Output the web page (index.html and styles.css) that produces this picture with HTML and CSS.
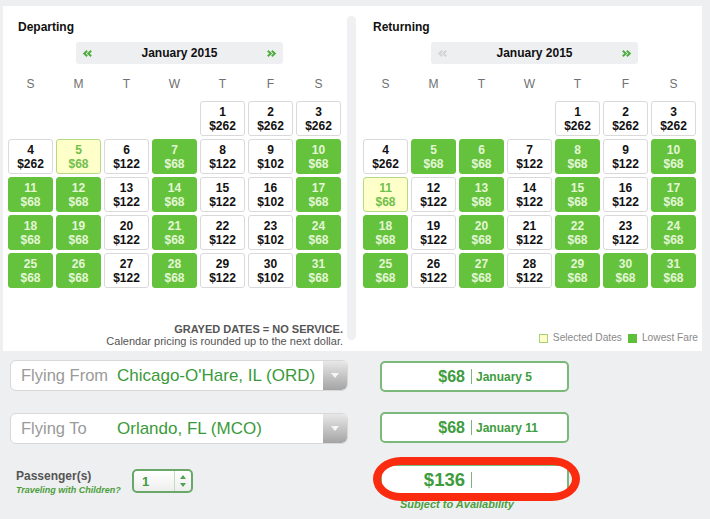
FILE: index.html
```html
<!DOCTYPE html>
<html>
<head>
<meta charset="utf-8">
<link rel="stylesheet" href="styles.css">
</head>
<body>
<div class="top">
  <section class="cal cal-depart">
    <h2 class="cal-title">Departing</h2>
    <div class="nav">
      <svg class="chev" width="9" height="7" viewBox="0 0 9 7"><path d="M4.2 0.8 L1.3 3.5 L4.2 6.2 M8.2 0.8 L5.3 3.5 L8.2 6.2" fill="none" stroke="#4fae3f" stroke-width="2"/></svg>
      <span class="month">January 2015</span>
      <svg class="chev" width="9" height="7" viewBox="0 0 9 7"><path d="M0.8 0.8 L3.7 3.5 L0.8 6.2 M4.8 0.8 L7.7 3.5 L4.8 6.2" fill="none" stroke="#4fae3f" stroke-width="2"/></svg>
    </div>
    <div class="dow"><span>S</span><span>M</span><span>T</span><span>W</span><span>T</span><span>F</span><span>S</span></div>
    <div class="days">
      <div class="day empty"></div><div class="day empty"></div><div class="day empty"></div><div class="day empty"></div>
      <div class="day">1<br>$262</div><div class="day">2<br>$262</div><div class="day">3<br>$262</div>
      <div class="day">4<br>$262</div><div class="day sel">5<br>$68</div><div class="day">6<br>$122</div><div class="day low">7<br>$68</div><div class="day">8<br>$122</div><div class="day">9<br>$102</div><div class="day low">10<br>$68</div>
      <div class="day low">11<br>$68</div><div class="day low">12<br>$68</div><div class="day">13<br>$122</div><div class="day low">14<br>$68</div><div class="day">15<br>$122</div><div class="day">16<br>$102</div><div class="day low">17<br>$68</div>
      <div class="day low">18<br>$68</div><div class="day low">19<br>$68</div><div class="day">20<br>$122</div><div class="day low">21<br>$68</div><div class="day">22<br>$122</div><div class="day">23<br>$102</div><div class="day low">24<br>$68</div>
      <div class="day low">25<br>$68</div><div class="day low">26<br>$68</div><div class="day">27<br>$122</div><div class="day low">28<br>$68</div><div class="day">29<br>$122</div><div class="day">30<br>$102</div><div class="day low">31<br>$68</div>
    </div>
    <div class="notes"><strong>GRAYED DATES = NO SERVICE.</strong><br>Calendar pricing is rounded up to the next dollar.</div>
  </section>
  <div class="divider"></div>
  <section class="cal cal-return">
    <h2 class="cal-title">Returning</h2>
    <div class="nav">
      <svg class="chev" width="9" height="7" viewBox="0 0 9 7"><path d="M4.2 0.8 L1.3 3.5 L4.2 6.2 M8.2 0.8 L5.3 3.5 L8.2 6.2" fill="none" stroke="#d2d4d6" stroke-width="2"/></svg>
      <span class="month">January 2015</span>
      <svg class="chev" width="9" height="7" viewBox="0 0 9 7"><path d="M0.8 0.8 L3.7 3.5 L0.8 6.2 M4.8 0.8 L7.7 3.5 L4.8 6.2" fill="none" stroke="#4fae3f" stroke-width="2"/></svg>
    </div>
    <div class="dow"><span>S</span><span>M</span><span>T</span><span>W</span><span>T</span><span>F</span><span>S</span></div>
    <div class="days">
      <div class="day empty"></div><div class="day empty"></div><div class="day empty"></div><div class="day empty"></div>
      <div class="day">1<br>$262</div><div class="day">2<br>$262</div><div class="day">3<br>$262</div>
      <div class="day">4<br>$262</div><div class="day low">5<br>$68</div><div class="day low">6<br>$68</div><div class="day">7<br>$122</div><div class="day low">8<br>$68</div><div class="day">9<br>$122</div><div class="day low">10<br>$68</div>
      <div class="day sel">11<br>$68</div><div class="day">12<br>$122</div><div class="day low">13<br>$68</div><div class="day">14<br>$122</div><div class="day low">15<br>$68</div><div class="day">16<br>$122</div><div class="day low">17<br>$68</div>
      <div class="day low">18<br>$68</div><div class="day">19<br>$122</div><div class="day low">20<br>$68</div><div class="day">21<br>$122</div><div class="day low">22<br>$68</div><div class="day">23<br>$122</div><div class="day low">24<br>$68</div>
      <div class="day low">25<br>$68</div><div class="day">26<br>$122</div><div class="day low">27<br>$68</div><div class="day">28<br>$122</div><div class="day low">29<br>$68</div><div class="day low">30<br>$68</div><div class="day low">31<br>$68</div>
    </div>
    <div class="legend">
      <span class="swatch swatch-sel"></span><span class="legend-text">Selected Dates</span>
      <span class="swatch swatch-low"></span><span class="legend-text">Lowest Fare</span>
    </div>
  </section>
</div>

<div class="form">
  <div class="form-left">
    <div class="select">
      <span class="sel-label">Flying From</span>
      <span class="sel-value">Chicago-O'Hare, IL (ORD)</span>
      <span class="sel-arrow"><svg width="8" height="5" viewBox="0 0 8 5"><polygon points="0,0 8,0 4,5" fill="#f6f6f6"/></svg></span>
    </div>
    <div class="select">
      <span class="sel-label">Flying To</span>
      <span class="sel-value">Orlando, FL (MCO)</span>
      <span class="sel-arrow"><svg width="8" height="5" viewBox="0 0 8 5"><polygon points="0,0 8,0 4,5" fill="#f6f6f6"/></svg></span>
    </div>
    <div class="pax">
      <div class="pax-label">
        <div class="pax-title">Passenger(s)</div>
        <div class="pax-kids">Traveling with Children?</div>
      </div>
      <div class="pax-select">
        <span class="pax-value">1</span>
        <span class="pax-arrows"><svg width="6" height="12" viewBox="0 0 6 12"><polygon points="3,0 6,4 0,4" fill="#4fa24f"/><polygon points="0,8 6,8 3,12" fill="#4fa24f"/></svg></span>
      </div>
    </div>
  </div>
  <div class="form-right">
    <div class="pbox"><span class="amt">$68</span><span class="sep"></span><span class="date">January 5</span></div>
    <div class="pbox"><span class="amt">$68</span><span class="sep"></span><span class="date">January 11</span></div>
    <div class="total-wrap">
      <div class="pbox pbox-total"><span class="amt">$136</span><span class="sep"></span><span class="date"></span></div>
      <div class="ring"></div>
    </div>
    <div class="subject">Subject to Availability</div>
  </div>
</div>
</body>
</html>
```

FILE: styles.css
```css
html, body {
  margin: 0;
  padding: 0;
}
body {
  background: #eeeff1;
  font-family: "Liberation Sans", Arial, Helvetica, sans-serif;
  width: 710px;
  height: 519px;
  overflow: hidden;
}
.top {
  display: flex;
  margin: 6px 0 0 3px;
  width: 699px;
  height: 345px;
  background: #fff;
}
.cal {
  display: flex;
  flex-direction: column;
  box-sizing: border-box;
  padding-top: 12px;
}
.cal-depart {
  width: 344px;
  padding-left: 5px;
}
.cal-return {
  width: 346px;
  padding-left: 7px;
}
.divider {
  width: 9px;
  margin: 10px 0 11px;
  background: #eef0f2;
  border-radius: 5px;
}
.cal-title {
  margin: 0 0 0 10px;
  font-size: 12px;
  line-height: 18px;
  font-weight: bold;
  color: #111;
}
.nav {
  margin: 6px 0 0 68px;
  width: 207px;
  height: 22px;
  box-sizing: border-box;
  padding: 0 7px;
  background: #eeeff1;
  border-radius: 3px;
  display: flex;
  align-items: center;
  justify-content: space-between;
}
.chev {
  display: block;
}
.month {
  font-size: 12px;
  font-weight: bold;
  color: #111;
}
.dow {
  margin-top: 12px;
  display: grid;
  grid-template-columns: repeat(7, 45px);
  column-gap: 3px;
  font-size: 12px;
  line-height: 16px;
  color: #707070;
  text-align: center;
}
.days {
  margin-top: 9px;
  display: grid;
  grid-template-columns: repeat(7, 45px);
  grid-auto-rows: 35px;
  gap: 3px;
}
.day {
  box-sizing: border-box;
  border: 1px solid #d9d9d9;
  border-radius: 3px;
  background: #fff;
  display: flex;
  align-items: center;
  justify-content: center;
  text-align: center;
  font-size: 12px;
  line-height: 14px;
  font-weight: bold;
  color: #111;
}
.day.empty {
  border: none;
  background: transparent;
}
.day.low {
  background: #64c23d;
  border-color: #64c23d;
  color: #e4f6d6;
}
.day.sel {
  background: #ffffca;
  border-color: #b4da86;
  color: #6fc04a;
}
.notes {
  margin-top: auto;
  padding: 0 4px 4px 0;
  text-align: right;
  font-size: 11px;
  line-height: 12px;
  color: #555;
}
.legend {
  margin-top: auto;
  padding: 0 4px 7px 0;
  display: flex;
  justify-content: flex-end;
  align-items: center;
  font-size: 10.2px;
  line-height: 12px;
  color: #8a8a8a;
}
.swatch {
  width: 9px;
  height: 9px;
  box-sizing: border-box;
  margin-right: 5px;
}
.swatch-sel {
  background: #ffffca;
  border: 1px solid #a8d27a;
}
.swatch-low {
  background: #5dbf3a;
  margin-left: 6px;
}
.form {
  display: flex;
  padding: 9px 0 0 10px;
}
.form-left {
  width: 338px;
  flex-shrink: 0;
}
.select {
  display: flex;
  height: 31px;
  box-sizing: border-box;
  border: 1px solid #d8d8d8;
  border-radius: 6px;
  background: #fff;
  overflow: hidden;
  white-space: nowrap;
}
.select + .select {
  margin-top: 22px;
}
.sel-label {
  flex: 0 0 106px;
  box-sizing: border-box;
  padding-left: 10px;
  display: flex;
  align-items: center;
  font-size: 16.5px;
  color: #9a9a9a;
}
.sel-value {
  flex: 1 1 auto;
  min-width: 0;
  display: flex;
  align-items: center;
  font-size: 17px;
  color: #3a9a3a;
}
.sel-arrow {
  flex: 0 0 24px;
  display: flex;
  align-items: center;
  justify-content: center;
  background: linear-gradient(#e8e8e8, #a4a4a4);
  border-radius: 0 5px 5px 0;
}
.pax {
  display: flex;
  margin-top: 25px;
  padding-left: 6px;
}
.pax-label {
  flex: 0 0 116px;
  white-space: nowrap;
}
.pax-title {
  font-size: 12px;
  line-height: 14px;
  font-weight: bold;
  color: #555;
}
.pax-kids {
  margin-top: 1px;
  font-size: 9px;
  line-height: 12px;
  font-weight: bold;
  font-style: italic;
  color: #4c9e3c;
}
.pax-select {
  flex: 0 0 61px;
  height: 24px;
  box-sizing: border-box;
  border: 2px solid #6aa86a;
  border-radius: 5px;
  background: linear-gradient(#fff, #eeeeee);
  display: flex;
  align-items: stretch;
}
.pax-value {
  flex: 1;
  padding-left: 8px;
  display: flex;
  align-items: center;
  font-size: 13px;
  font-weight: bold;
  color: #3e9c3e;
}
.pax-arrows {
  width: 16px;
  border-left: 1px solid #c5d9c5;
  display: flex;
  align-items: center;
  justify-content: center;
}
.form-right {
  margin-left: 32px;
  width: 189px;
  flex-shrink: 0;
  padding-top: 1px;
}
.pbox {
  height: 31px;
  box-sizing: border-box;
  border: 2px solid #7ab97a;
  border-radius: 5px;
  background: #fff;
  display: flex;
  align-items: center;
  white-space: nowrap;
}
.pbox + .pbox {
  margin-top: 20px;
}
.amt {
  flex: 0 0 89px;
  box-sizing: border-box;
  padding-right: 6px;
  text-align: right;
  font-size: 16px;
  font-weight: bold;
  color: #3e9c3e;
}
.sep {
  flex: 0 0 1px;
  height: 15px;
  background: #7ab57a;
}
.date {
  padding-left: 4px;
  font-size: 12px;
  font-weight: bold;
  color: #3e9c3e;
}
.total-wrap {
  position: relative;
  margin-top: 21px;
}
.pbox-total .amt {
  font-size: 18.5px;
}
.pbox-total .sep {
  height: 16px;
}
.ring {
  position: absolute;
  left: -7px;
  top: -7px;
  width: 207px;
  height: 44px;
  box-sizing: border-box;
  border: 8px solid #fa2b0e;
  border-radius: 28px / 22px;
  z-index: 2;
}
.subject {
  margin-top: 3px;
  padding-left: 20px;
  font-size: 11px;
  line-height: 13px;
  font-weight: bold;
  font-style: italic;
  color: #4c9e3c;
  white-space: nowrap;
}
```
